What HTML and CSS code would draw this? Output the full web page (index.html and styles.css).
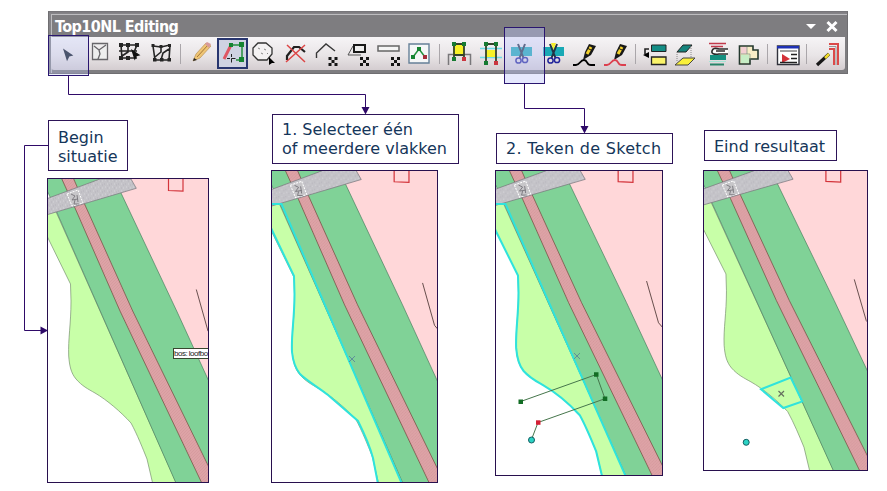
FILE: index.html
```html
<!DOCTYPE html>
<html lang="nl">
<head>
<meta charset="utf-8">
<title>Top10NL Editing</title>
<link rel="stylesheet" href="styles.css">
</head>
<body>
<svg class="defs" aria-hidden="true">
  <defs>
    <pattern id="speckle" width="7" height="7" patternUnits="userSpaceOnUse">
      <rect width="7" height="7" fill="#c4c3c8"/>
      <path d="M1 1h1M5 2h1M3 5h1" stroke="#d6d5da"/><path d="M3 2h1M0 5h1M5 6h1" stroke="#b6b4bc"/>
    </pattern>
    <pattern id="brick" width="3" height="3" patternUnits="userSpaceOnUse">
      <rect width="3" height="3" fill="#dda3a6"/><path d="M0 3L3 0" stroke="#d4959b" stroke-width=".6"/>
    </pattern>
    <g id="land">
      <path fill="#ffd7d9" d="M60-5H180V240H120Z"/>
      <path fill="#c8ffa8" stroke="#77906e" stroke-width=".7" d="M-2 55L22.5 105L23 122C23 145 20 160 20.7 177C21.500 187 23 194 28 200C34 207 40 210 47 214C59 221 73 233 83 244C89 255 95 270 99 280L106 310H131L5 26L-2 26Z"/>
      <path fill="#80d297" stroke="#4c8060" stroke-width=".7" d="M-2-3H66L73 14L128.700 132L180 244V320H135L8.700 33L-6 0Z"/>
      <path fill="url(#brick)" stroke="#7a5548" stroke-width=".8" d="M12-4L27 29L72 132L159 315L174 315L84.700 132L37 26L24-4Z"/>
      <path fill="url(#speckle)" stroke="#77757b" stroke-width=".7" d="M-2 20L52 0H83L88.300 9.300L-2 36Z"/>
      <path fill="#c7c6c9" stroke="#fff" stroke-dasharray="2 1" d="M19 15L30 11L35 24L24 27Z"/>
      <path fill="none" stroke="#77757b" stroke-width=".9" d="M23 15l4 2-3 4 6-1M27 21l-1 4 5 0M29 16l1 7"/>
      <path fill="none" stroke="#d3343b" stroke-width="1.200" d="M120.500-1V11.500L135 12.200V-1"/>
      <path fill="none" stroke="#58413f" stroke-width=".9" d="M148.300 110.500L160 152L166 159"/>
    </g>
    <path id="checker" d="M0 0h3v3h3V0h3v3H6v3h3v3H6V6H3v3H0V6h3V3H0Z" fill="#151515"/>
    <path id="cursor" d="M0 0L9 6L5.500 7L3.500 11Z"/>
    <g id="scissors">
      <path d="M0 4H21V13H0Z" fill="#19a9b5"/>
      <path d="M7 1L12.500 15M14 1L8.500 15" stroke="#253145" stroke-width="2" fill="none"/>
      <circle cx="7.500" cy="17.500" r="2.600" fill="none" stroke="#22249b" stroke-width="1.500"/>
      <circle cx="14" cy="17" r="2.600" fill="none" stroke="#22249b" stroke-width="1.500"/>
    </g>
    <g id="marker">
      <path d="M10 16L12 8L16 0L23 2L18 11Z" fill="#181818"/><path d="M14 10L18 3" stroke="#f4d12c" stroke-width="3"/><path d="M14 4L20 7" stroke="#181818"/>
      <path d="M0 21H3C7 21 7 16 11 16C15 16 13 21 18 21H22" fill="none" stroke="currentColor" stroke-width="1.800"/>
    </g>
  </defs>
</svg>

<main class="page">
  <header class="toolbar">
    <div class="titlebar">
      <span class="title">Top10NL Editing</span>
      <svg class="controls" viewBox="805 18 36 16"><path d="M807 23H817L812 28Z" fill="#fff"/><path d="M828.500 21L837.500 30M837.500 21L828.500 30" stroke="#fff" stroke-width="3"/></svg>
    </div>
    <div class="tools">
      <svg width="38" height="33" viewBox="51 37 38 33"><use href="#cursor" transform="translate(63 48.500) scale(1.150)" fill="#1b2433"/></svg>
      <svg width="24" height="33" viewBox="89 37 24 33"><path d="M92.500 43.500H107.500V59.500H92.500ZM94 46L99 50L106 45M99 50L100 54L98 59" fill="#eee" stroke="#68666a" stroke-width="1.300"/></svg>
      <svg width="33" height="33" viewBox="113 37 33 33"><path d="M120 45H138M121 45L122 59M120 58H137M128 44V52L122 56M119 51H137M137 45L134 52" fill="none" stroke="#252525" stroke-width="1.600"/><path d="M119 43h4v4h-4zM126 43h4v4h-4zM135 43h4v4h-4zM119 56h4v4h-4zM126 56h4v4h-4z" fill="#252525"/><use href="#cursor" transform="translate(131 49) scale(1.050)" fill="#111"/></svg>
      <svg width="31" height="33" viewBox="146 37 31 33"><path d="M153 46L161 47L170 45L169 60H155L153 46M161 47V52L155 57M169 49L163 53L161 60" fill="none" stroke="#252525" stroke-width="1.600"/><path d="M151.500 44h3v3h-3zM159.500 45h3v3h-3zM168 44h3v3h-3zM153 58h3.500v3.500h-3.500zM160 58h3.500v3.500h-3.500zM167.500 58h3.500v3.500h-3.500z" fill="#252525"/></svg>
      <i class="sep"></i>
      <svg width="31" height="33" viewBox="185 37 31 33"><path d="M193 61L196 54L206 43L211 46L200 58Z" fill="#efc575" stroke="#b99256" stroke-width=".7"/><path d="M197 57L208 45" stroke="#a57838"/><path d="M205 44L207 42L211 44L209 48Z" fill="#d79a9a"/><path d="M193 61L194 58L197 60Z" fill="#222"/></svg>
      <svg class="active" width="31" height="31" viewBox="217 38 31 31"><path d="M224 59L231 45" stroke="#df5663" stroke-width="3"/><path d="M231 45H242V60H236" fill="none" stroke="#258e3d" stroke-width="1.500"/><path d="M229 43h4v4h-4zM239 42h5v5h-5zM239 57h5v5h-5z" fill="#168432"/><path d="M231.500 54V63M227 58.500H236" stroke="#222" stroke-dasharray="3 1.500 4"/></svg>
      <svg width="33" height="33" viewBox="248 37 33 33"><path d="M258 43H266L272 48V54L267 60H258L253 55V48Z" fill="#f4f2f3" stroke="#333" stroke-width="1.300"/><path d="M258 48l2 1M264 49l2 1M261 53l2 1M267 53l1 1" stroke="#888"/><path d="M269 57L275 63L272 63L269 65Z"/></svg>
      <svg width="31" height="33" viewBox="281 37 31 33"><path d="M287 60V56L294 47H299L305 52" fill="none" stroke="#202020" stroke-width="2.200"/><path d="M287 45L305 62M305 45L286 62" stroke="#dc4545" stroke-width="1.500"/></svg>
      <svg width="30" height="33" viewBox="312 37 30 33"><path d="M316.500 58V53L326 44L335 51" fill="none" stroke="#373737" stroke-width="1.400"/><use href="#checker" x="328.500" y="57"/></svg>
      <svg width="31" height="33" viewBox="342 37 31 33"><path d="M353 46L348 55H361" fill="none" stroke="#555"/><path d="M354 45H365V52H354Z" fill="#eee" stroke="#181818" stroke-width="2"/><use href="#checker" x="360" y="57"/></svg>
      <svg width="31" height="33" viewBox="373 37 31 33"><path d="M378 46H399V51H378Z" fill="#f5f5f5" stroke="#666" stroke-width="1.500"/><use href="#checker" x="391" y="57"/></svg>
      <svg width="30" height="33" viewBox="404 37 30 33"><path d="M409 44H429V63H409Z" fill="#f5f7f7" stroke="#668098" stroke-width="1.400"/><path d="M413 57L419 49L425 57" fill="none" stroke="#23933e" stroke-width="1.500"/><path d="M417 47h4v4h-4zM411 55h4v4h-4z" fill="#168432"/><path d="M423 55h4v4h-4z" fill="#a62e3b"/></svg>
      <i class="sep wide"></i>
      <svg width="31" height="33" viewBox="444 37 31 33"><path d="M448.500 65V54.500H470.500V65" fill="none" stroke="#79777a" stroke-width="1.500"/><path d="M453 45H464V55H453Z" fill="#f7f128"/><path d="M454 59V44H464V59M454 55H464" fill="none" stroke="#34432b" stroke-width="1.800"/><path d="M452 42h4v4h-4zM462 42h4v4h-4zM452 57h4v4h-4z" fill="#167a31"/><path d="M462 57h4v4h-4z" fill="#ca343e"/></svg>
      <svg width="31" height="33" viewBox="475 37 31 33"><path d="M480 48.500H502M480 57.500H502" stroke="#6cdce6" stroke-width="1.500"/><path d="M486 50H495V57H486Z" fill="#f7f128"/><path d="M486 63V44H496V63" fill="none" stroke="#34432b" stroke-width="1.800"/><path d="M484 42h4v4h-4zM494 42h4v4h-4zM484 61h4v4h-4z" fill="#167a31"/><path d="M494 61h4v4h-4z" fill="#ca343e"/></svg>
      <svg width="32" height="33" viewBox="506 37 32 33"><use href="#scissors" x="511" y="43"/></svg>
      <svg width="31" height="33" viewBox="538 37 31 33"><use href="#scissors" x="543" y="43"/><path d="M551 43L553.500 50L556 43" fill="#f6ed28"/></svg>
      <svg width="31" height="33" viewBox="569 37 31 33"><use href="#marker" x="573" y="44"/></svg>
      <svg class="red" width="30" height="33" viewBox="600 37 30 33"><use href="#marker" x="604" y="44"/></svg>
      <i class="sep wide"></i>
      <svg width="31" height="33" viewBox="640 37 31 33"><path d="M651.500 45H666V51.500H651.500Z" fill="#148d85" stroke="#222"/><path d="M651.500 57H666V64.500H651.500Z" fill="#faf36a" stroke="#222" stroke-width="1.300"/><path d="M649 49H645V54" fill="none" stroke="#222" stroke-width="1.600"/><path d="M643 55L649 52V58Z"/></svg>
      <svg width="31" height="33" viewBox="671 37 31 33"><path d="M683 45H692L686 52H677Z" fill="#16847d" stroke="#222"/><path d="M683 58H695L688 65H675Z" fill="#f9ef3b" stroke="#444"/><path d="M677 52V62M691 46V58" stroke="#888" stroke-dasharray="1 1"/></svg>
      <svg width="31" height="33" viewBox="702 37 31 33"><path d="M709 43.500H726M711 46.500H723" stroke="#c1394b" stroke-width="1.500"/><path d="M710 55H726V60H710Z" fill="#169080"/><path d="M728 49H719Q713 47 712 51T719 54H728M716 51H725" fill="#fff" stroke="#2c2c2c" stroke-width="1.600"/><path d="M709 61.500H726" stroke="#a5e4d5"/><path d="M710 64.500H724" stroke="#278469" stroke-width="2"/></svg>
      <svg width="31" height="33" viewBox="733 37 31 33"><path d="M739.500 46H753V50H758V59H750V64H739.500Z" fill="#f8eec6" stroke="#24382e" stroke-width="1.600"/><path d="M741 47H747V54H741Z" fill="#f3cfd2"/><path d="M741 55H749V63H741Z" fill="#c7edc5"/><path d="M747 47V54H741M747 54H750V60" fill="none" stroke="#769080" stroke-width=".7"/></svg>
      <i class="sep tight"></i>
      <svg width="33" height="33" viewBox="770 37 33 33"><path d="M777.500 46H799V64.500H777.500Z" fill="#fff" stroke="#31323b" stroke-width="1.400"/><path d="M777 46H799V48.500H777Z" fill="#1f31b4"/><path d="M780 51H797" stroke="#444"/><path d="M782 54L790 59L782 63Z" fill="#d33239"/><path d="M791 54.500H797M791 58.500H797M780 62.500H797" stroke="#222" stroke-width="1.500"/></svg>
      <i class="sep"></i>
      <svg width="33" height="33" viewBox="811 37 33 33"><path d="M829 44H838V65M829 49H834V65" fill="none" stroke="#db4a4a" stroke-width="2"/><path d="M829 46.500H836V65" fill="none" stroke="#999"/><path d="M817 65L829 54" stroke="#181818" stroke-width="3.200"/><path d="M825 58L829 54" stroke="#f1dc28" stroke-width="2.500"/></svg>
    </div>
  </header>

  <section class="steps">
    <article class="step first">
      <h2 class="label">Begin<br>situatie</h2>
      <div class="map"><svg viewBox="0 0 160 303"><use href="#land"/></svg><span class="tip">bos: loofbo</span></div>
    </article>
    <article class="step second">
      <h2 class="label">1. Selecteer één<br>of meerdere vlakken</h2>
      <div class="map"><svg viewBox="272 171 165 311">
        <use href="#land" transform="translate(271 170) scale(1.022)"/>
        <path class="picked" d="M270 204L281.500 204L402 484M270 226L294 276L294.500 294C294.500 320 291 335 292 352C293 362 296 369 300 374C307 381 318 387 328 395L358 421C364 433 370 447 373 458L378 484"/>
        <path class="cross" d="M349 356l6 6M355 356l-6 6"/>
      </svg></div>
    </article>
    <article class="step third">
      <h2 class="label">2. Teken de Sketch</h2>
      <div class="map"><svg viewBox="496 171 166 304">
        <use href="#land" transform="translate(495 170) scale(1.022 1.005)"/>
        <path class="picked" d="M494 204L505.500 204L626 477"/>
        <path class="picked" transform="translate(495 170) scale(1.022 1.005)" d="M-2 55L22.500 105L23 122C23 145 20 160 20.700 177C21.500 187 23 194 28 200C34 207 40 210 47 214C59 221 73 233 83 244C89 255 95 270 99 280L106 310"/>
        <path class="cross" d="M574 353l6 6M580 353l-6 6"/>
        <path fill="none" stroke="#46764c" d="M520.700 401.500L596.300 374.500L605 398.700L538 422.500L531.300 440"/>
        <path fill="#126d24" d="M518.500 399.500h4.500v4.500h-4.500zM594 372.300h4.500v4.500h-4.500zM602.800 396.500h4.500v4.500h-4.500z"/>
        <path fill="#d42035" d="M536 420.300h4.500v4.500h-4.500z"/>
        <circle class="node" cx="531.500" cy="440" r="3"/>
      </svg></div>
    </article>
    <article class="step fourth">
      <h2 class="label">Eind resultaat</h2>
      <div class="map"><svg viewBox="704 171 163 299">
        <use href="#land" transform="translate(703 170) scale(1.02 .99)"/>
        <path class="picked" d="M761 389.300L790.700 377.500L802.300 401.500L783.300 408Z"/>
        <path class="cross dark" d="M778.500 391l5.500 5.500M784 391l-5.500 5.500"/>
        <circle class="node" cx="746.200" cy="442.300" r="3"/>
      </svg></div>
    </article>
  </section>

  <div class="focus pick"></div>
  <div class="focus cut"></div>
  <svg class="connectors" viewBox="0 0 887 491">
    <path class="wire" d="M68.500 75V94.500H365.500V108M524.500 83V108.500H584.500V127M48 145.500H24.500V330.500H41"/>
    <path class="heads" d="M361.500 107H369.500L365.500 114.500ZM580.500 126H588.500L584.500 133.500ZM40.500 326.500V334.500L48 330.500Z"/>
  </svg>
</main>
</body>
</html>
```
FILE: styles.css
```css
* { box-sizing: border-box; }
body { margin: 0; background: #fff; }
.defs { position: absolute; width: 0; height: 0; }
.page { position: relative; width: 887px; height: 491px; overflow: hidden; padding-top: 11px; }
.toolbar {
  width: 800px; height: 63px; margin-left: 48px; padding: 2px 3px 3px;
  background: #7e7d80; border: 1px solid #6f6e71; border-top-color: #77767a;
  box-shadow: inset 0 2px 0 -1px #817f83, inset 2px 2px 0 #858488, inset 3px 3px 0 #bdbcbf;
}
.titlebar { display: flex; align-items: center; justify-content: space-between; height: 23px; padding: 3px 4px 0 3px; }
.title { color: #fff; font: bold 16px/20px "DejaVu Sans Condensed", "DejaVu Sans", sans-serif; font-stretch: condensed; letter-spacing: -.55px; white-space: nowrap; }
.controls { width: 36px; height: 16px; }
.tools {
  display: flex; align-items: center; height: 33px; margin: 0 -1px;
  background: linear-gradient(#f6f4f6, #e9e5e7 55%, #d4cdd0); border-radius: 0 0 3px 3px;
}
.tools svg { display: block; flex: none; }
.tools .active { background: #cfd3e2; outline: 2px solid #28366f; outline-offset: -2px; margin-left: 1px; }
.tools .red { color: #dc3f4e; }
.sep { flex: none; width: 1px; height: 20px; margin: 0 4px 0 3px; background: #aaa6aa; }
.sep.wide { margin: 0 4px 0 5px; }
.sep.tight { margin: 0 2px 0 3px; }

.steps { display: flex; align-items: flex-start; padding-left: 47px; }
.step { flex: none; }
.first { width: 162px; margin: 46px 62px 0 0; }
.second { width: 188px; margin: 40px 36px 0 0; }
.third { width: 178px; margin: 59px 30px 0 0; }
.fourth { width: 165px; margin-top: 56px; }
.label {
  margin: 0 0 0 1px; padding: 5px 0 0 9px; border: 1px solid #2d1458; background: #fff;
  color: #15365a; font: normal 16px/19px "DejaVu Sans", Verdana, sans-serif; white-space: nowrap;
}
.first .label { width: 80px; height: 51px; padding-top: 7px; margin-bottom: 7px; }
.second .label { width: 187px; height: 50px; margin-bottom: 6px; }
.third .label { width: 177px; height: 31px; margin-bottom: 6px; letter-spacing: .3px; }
.fourth .label { width: 133px; height: 31px; padding-top: 6px; margin-bottom: 9px; }
.map { position: relative; overflow: hidden; border: 1px solid #28104e; background: #fff; }
.map svg { display: block; width: 100%; height: 100%; }
.first .map { width: 162px; height: 305px; }
.second .map { width: 167px; height: 313px; }
.third .map { width: 168px; height: 306px; }
.fourth .map { width: 165px; height: 301px; }
.tip {
  position: absolute; right: 0; top: 169px; width: 35px; height: 11px;
  border: 1px solid #38472f; border-right: 0; background: #fff; color: #222;
  font: 8px/9px "Liberation Sans", sans-serif; letter-spacing: -.5px; white-space: nowrap;
}
.picked { fill: none; stroke: #2fe3dc; stroke-width: 2; }
.cross { fill: none; stroke: #5f8f99; }
.cross.dark { stroke: #66705f; stroke-width: 1.200; }
.node { fill: #2bd3c4; stroke: #155f63; }

.focus { position: absolute; border: 1px solid #2a1670; background: rgba(190, 198, 250, .4); }
.pick { left: 48px; top: 35px; width: 41px; height: 41px; background: rgba(190, 198, 250, .3); }
.cut { left: 504px; top: 27px; width: 41px; height: 57px; }
.connectors { position: absolute; left: 0; top: 0; width: 887px; height: 491px; pointer-events: none; }
.wire { fill: none; stroke: #2f0a68; }
.heads { fill: #2f0a68; }
```
